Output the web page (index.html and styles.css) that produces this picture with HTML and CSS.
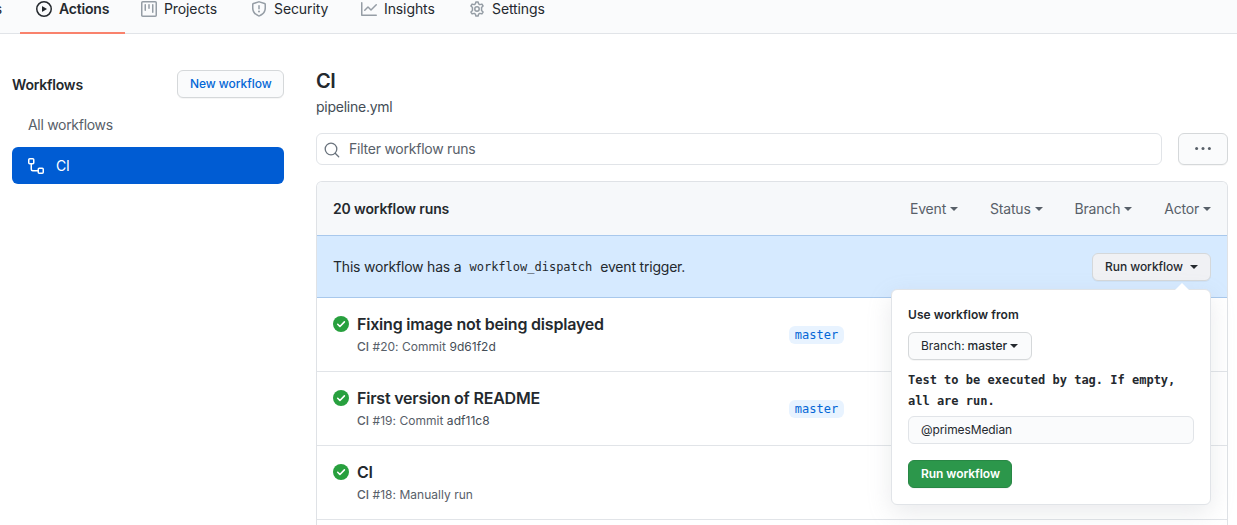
FILE: index.html
```html
<!DOCTYPE html>
<html lang="en">
<head>
<meta charset="utf-8">
<title>Workflow runs</title>
<link rel="stylesheet" href="styles.css">
</head>
<body>
<nav class="tabs">
  <a class="tab tab-partial">Pull requests</a>
  <a class="tab tab-actions selected"><svg class="icon" viewBox="0 0 16 16"><path fill-rule="evenodd" d="M1.5 8a6.5 6.5 0 1113 0 6.5 6.5 0 01-13 0zM8 0a8 8 0 100 16A8 8 0 008 0zM6.379 5.227A.25.25 0 006 5.442v5.117a.25.25 0 00.379.214l4.264-2.559a.25.25 0 000-.428L6.379 5.227z"/></svg><span>Actions</span></a>
  <a class="tab"><svg class="icon" viewBox="0 0 16 16"><path fill-rule="evenodd" d="M1.75 0A1.75 1.75 0 000 1.75v12.5C0 15.216.784 16 1.75 16h12.5A1.75 1.75 0 0016 14.25V1.75A1.75 1.75 0 0014.25 0H1.75zM1.5 1.75a.25.25 0 01.25-.25h12.5a.25.25 0 01.25.25v12.5a.25.25 0 01-.25.25H1.75a.25.25 0 01-.25-.25V1.75zM11.75 3a.75.75 0 00-.75.75v7.5a.75.75 0 001.5 0v-7.5a.75.75 0 00-.75-.75zm-8.25.75a.75.75 0 011.5 0v5.5a.75.75 0 01-1.5 0v-5.5zM8 3a.75.75 0 00-.75.75v3.5a.75.75 0 001.5 0v-3.5A.75.75 0 008 3z"/></svg><span>Projects</span></a>
  <a class="tab"><svg class="icon" viewBox="0 0 16 16"><path fill-rule="evenodd" d="M7.467.133a1.75 1.75 0 011.066 0l5.25 1.68A1.75 1.75 0 0115 3.48V7c0 1.566-.32 3.182-1.303 4.682-.983 1.498-2.585 2.813-5.032 3.855a1.7 1.7 0 01-1.33 0c-2.447-1.042-4.049-2.357-5.032-3.855C1.32 10.182 1 8.566 1 7V3.48a1.75 1.75 0 011.217-1.667l5.25-1.68zm.61 1.429a.25.25 0 00-.153 0l-5.25 1.68a.25.25 0 00-.174.238V7c0 1.358.275 2.666 1.057 3.86.784 1.194 2.121 2.34 4.366 3.297a.2.2 0 00.154 0c2.245-.956 3.582-2.104 4.366-3.298C13.225 9.666 13.5 8.36 13.5 7V3.48a.25.25 0 00-.174-.237l-5.25-1.68zM9 10.5a1 1 0 11-2 0 1 1 0 012 0zm-.25-5.75a.75.75 0 10-1.5 0v3a.75.75 0 001.5 0v-3z"/></svg><span>Security</span></a>
  <a class="tab tab-insights"><svg class="icon" viewBox="0 0 16 16"><path fill-rule="evenodd" d="M1.5 1.75a.75.75 0 00-1.5 0v12.5c0 .414.336.75.75.75h14.5a.75.75 0 000-1.5H1.5V1.75zm14.28 2.53a.75.75 0 00-1.06-1.06L10 7.94 7.53 5.47a.75.75 0 00-1.06 0L3.22 8.72a.75.75 0 001.06 1.06L7 7.06l2.47 2.47a.75.75 0 001.06 0l5.25-5.25z"/></svg><span>Insights</span></a>
  <a class="tab tab-settings"><svg class="icon" viewBox="0 0 16 16" fill="none" stroke="currentColor" stroke-width="1.5" stroke-linejoin="round"><path d="M6.9.9h2.2l.5 2 1.3.75 2-.55 1.15 1.9-1.5 1.55v2.9l1.5 1.55-1.15 1.9-2-.55-1.3.75-.5 2H6.9l-.5-2-1.3-.75-2 .55L1.95 11l1.5-1.55v-2.9L1.95 5 3.1 3.1l2 .55 1.3-.75z"/><circle cx="8" cy="8" r="2.2"/></svg><span>Settings</span></a>
</nav>
<div class="layout">
  <aside class="sidebar">
    <div class="side-head"><h2 class="side-title">Workflows</h2><button class="btn btn-new">New workflow</button></div>
    <a class="side-link">All workflows</a>
    <a class="side-link current"><svg class="icon" viewBox="0 0 16 16" fill="none" stroke="currentColor" stroke-width="1.5"><rect x=".75" y=".75" width="5" height="5" rx="1"/><rect x="10.25" y="10.25" width="5" height="5" rx="1"/><path d="M3.25 5.75v5.5c0 .9.6 1.5 1.5 1.5h5.5"/></svg><span>CI</span></a>
  </aside>
  <main class="main">
    <h1 class="title">CI</h1>
    <div class="file">pipeline.yml</div>
    <div class="filter-row">
      <div class="search"><svg class="icon" viewBox="0 0 16 16" fill="none" stroke="currentColor" stroke-width="1.3" stroke-linecap="round"><circle cx="7" cy="7" r="5.8"/><path d="M11.2 11.2l3.5 3.5"/></svg><span>Filter workflow runs</span></div>
      <button class="btn btn-more"><svg class="icon" viewBox="0 0 16 16"><circle cx="1.6" cy="7.5" r="1.5"/><circle cx="8" cy="7.5" r="1.5"/><circle cx="14.4" cy="7.5" r="1.5"/></svg></button>
    </div>
    <section class="box">
      <header class="box-head">
        <strong class="count">20 workflow runs</strong>
        <div class="filters">
          <span class="filter">Event<i class="caret"></i></span>
          <span class="filter">Status<i class="caret"></i></span>
          <span class="filter">Branch<i class="caret"></i></span>
          <span class="filter">Actor<i class="caret"></i></span>
        </div>
      </header>
      <div class="dispatch">
        <div class="dispatch-text"><span>This workflow has a</span><code>workflow_dispatch</code><span>event trigger.</span></div>
        <div class="run-menu">
          <button class="btn btn-run"><span>Run workflow</span><i class="caret"></i></button>
          <div class="popover">
            <div class="pop-title">Use workflow from</div>
            <button class="btn btn-branch"><span>Branch:</span><span class="branch-name">master</span><i class="caret"></i></button>
            <div class="pop-label">Test to be executed by tag. If empty, all are run.</div>
            <div class="pop-input">@primesMedian</div>
            <button class="btn btn-green">Run workflow</button>
          </div>
        </div>
      </div>
      <article class="run">
        <svg class="icon check" viewBox="0 0 16 16"><circle cx="8" cy="8" r="8"/><path d="M4.7 8.3l2.2 2.2 4.5-4.6"/></svg>
        <div class="run-info"><h3 class="run-title">Fixing image not being displayed</h3><div class="meta"><b>CI</b> #20: Commit <em>9d61f2d</em></div></div>
        <span class="branch">master</span>
      </article>
      <article class="run">
        <svg class="icon check" viewBox="0 0 16 16"><circle cx="8" cy="8" r="8"/><path d="M4.7 8.3l2.2 2.2 4.5-4.6"/></svg>
        <div class="run-info"><h3 class="run-title">First version of README</h3><div class="meta"><b>CI</b> #19: Commit <em>adf11c8</em></div></div>
        <span class="branch">master</span>
      </article>
      <article class="run">
        <svg class="icon check" viewBox="0 0 16 16"><circle cx="8" cy="8" r="8"/><path d="M4.7 8.3l2.2 2.2 4.5-4.6"/></svg>
        <div class="run-info"><h3 class="run-title">CI</h3><div class="meta"><b>CI</b> #18: Manually run</div></div>
      </article>
      <div class="next-run"></div>
    </section>
  </main>
</div>
</body>
</html>
```
FILE: styles.css
```css
* { box-sizing: border-box; }
html { overflow: hidden; }
body { margin: 0; height: 525px; overflow: hidden; background: #fff; color: #24292e; font: 14px/21px Inter, "Liberation Sans", sans-serif; letter-spacing: -0.1px; }
h1, h2, h3 { margin: 0; font-weight: 600; }
.icon { width: 16px; height: 16px; flex: none; fill: currentColor; }
.icon[fill="none"] { fill: none; }

.tabs { display: flex; height: 34px; padding-left: 20px; background: #fafbfc; border-bottom: 1px solid #e1e4e8; }
.tab { display: flex; flex: none; width: 110px; height: 34px; padding: 1px 0 0 16px; gap: 7px; line-height: 16px; white-space: nowrap; }
.tab .icon { color: #959da5; }
.tab-partial { width: 90px; margin-left: -108px; margin-right: 18px; padding: 1px 0 0; justify-content: flex-end; }
.tab.selected { width: 105px; border-bottom: 2px solid #f9826c; font-weight: 600; letter-spacing: -0.2px; }
.tab.selected .icon { color: #24292e; }
.tab-insights { width: 108px; }

.layout { display: flex; gap: 32px; padding: 0 9px 0 12px; }
.sidebar { width: 272px; flex: none; padding-top: 36px; }
.side-head { display: flex; justify-content: space-between; align-items: center; height: 28px; margin-bottom: 16px; }
.side-title { font-size: 14px; letter-spacing: -0.2px; }
.side-link { display: flex; align-items: center; height: 21px; padding-left: 16px; color: #586069; margin-bottom: 12px; letter-spacing: -0.3px; }
.side-link.current { height: 37px; gap: 12px; border-radius: 6px; background: #005cd3; color: #fff; }

.btn { display: flex; align-items: center; height: 28px; margin: 0; padding: 0 12px; border: 1px solid #d5d8da; border-radius: 6px; background: #fafbfc; color: #24292e; font: 500 12px/20px Inter, "Liberation Sans", sans-serif; letter-spacing: -0.05px; box-shadow: 0 1px 0 rgba(27,31,35,.04); white-space: nowrap; }
.btn-new { width: 107px; color: #0366d6; }
.caret { width: 0; height: 0; border: 4px solid transparent; border-top-color: currentColor; border-bottom: 0; }

.main { width: 912px; flex: none; padding-top: 32px; }
.title { font-size: 20px; line-height: 30px; letter-spacing: -0.4px; }
.file { line-height: 21px; color: #444d56; letter-spacing: -0.25px; }
.filter-row { display: flex; gap: 16px; margin-top: 16px; }
.search { display: flex; align-items: center; gap: 9px; width: 846px; height: 32px; padding: 0 0 1px 7px; border: 1px solid #e1e4e8; border-radius: 6px; color: #586069; letter-spacing: -0.24px; }
.search .icon { color: #6a737d; margin-top: 3px; }
.btn-more { width: 50px; height: 32px; justify-content: center; color: #586069; }

.box { margin-top: 16px; border: 1px solid #dfe2e6; border-bottom: 0; border-radius: 6px 6px 0 0; }
.box-head { display: flex; align-items: center; justify-content: space-between; height: 54px; padding: 0 16px; background: #f6f8fa; border-bottom: 1px solid #a8c8ec; border-radius: 5px 5px 0 0; }
.count { font-weight: 600; letter-spacing: -0.14px; }
.filters { display: flex; gap: 32px; color: #586069; letter-spacing: -0.2px; }
.filter { display: flex; align-items: center; gap: 4px; }
.dispatch { display: flex; align-items: center; justify-content: space-between; height: 62px; padding: 0 16px; background: #d6eaff; border-bottom: 1px solid #a8c8ec; }
.dispatch-text { display: flex; align-items: center; gap: 8px; letter-spacing: -0.2px; }
.dispatch code { padding-top: 2px; font: 12px/21px "DejaVu Sans Mono", monospace; letter-spacing: 0; }
.run-menu { position: relative; }
.btn-run { width: 119px; background: #f0f1f4; gap: 7px; }
.popover { position: absolute; z-index: 2; top: 36px; right: 0; width: 320px; height: 216px; padding: 16px 16px; background: #fff; border: 1px solid #e1e4e8; border-radius: 6px; box-shadow: 0 8px 24px rgba(149,157,165,.2); }
.popover::before { content: ""; position: absolute; top: -7px; right: 21px; border: 7px solid transparent; border-top: 0; border-bottom-color: #fff; }
.pop-title { height: 18px; font-size: 12px; line-height: 18px; font-weight: 600; letter-spacing: 0.06px; }
.btn-branch { width: 124px; margin-top: 8px; font-weight: 400; letter-spacing: 0; }
.branch-name { margin: 0 3px; font-weight: 500; }
.pop-label { margin-top: 10px; font: bold 12px/21px "DejaVu Sans Mono", monospace; letter-spacing: 0; }
.pop-input { height: 28px; margin-top: 4px; padding: 0 12px; border: 1px solid #e1e4e8; border-radius: 6px; background: #fafbfc; font-size: 12px; line-height: 26px; }
.btn-green { width: 104px; margin-top: 16px; background: #2c974b; border-color: #288745; color: #fff; font-weight: 600; }

.run { display: flex; height: 74px; padding: 16px 16px 0; border-bottom: 1px solid #e1e4e8; }
.next-run { height: 5px; }
.check { margin-top: 2px; fill: #28a03e; }
.check path { fill: none; stroke: #fff; stroke-width: 1.6; stroke-linecap: round; stroke-linejoin: round; }
.run-info { width: 432px; margin-left: 8px; }
.run-title { font-size: 16px; line-height: 21px; letter-spacing: -0.2px; white-space: nowrap; }
.meta { margin-top: 3px; font-size: 12px; line-height: 18px; color: #586069; letter-spacing: 0.03px; }
.meta b { font-weight: 500; }
.meta em { font-style: normal; color: #444d56; }
.branch { width: 55px; height: 18px; margin-top: 12px; border-radius: 6px; background: #e8f3ff; color: #0366d6; text-align: center; font: 12px/18px "DejaVu Sans Mono", monospace; letter-spacing: 0; }
```
